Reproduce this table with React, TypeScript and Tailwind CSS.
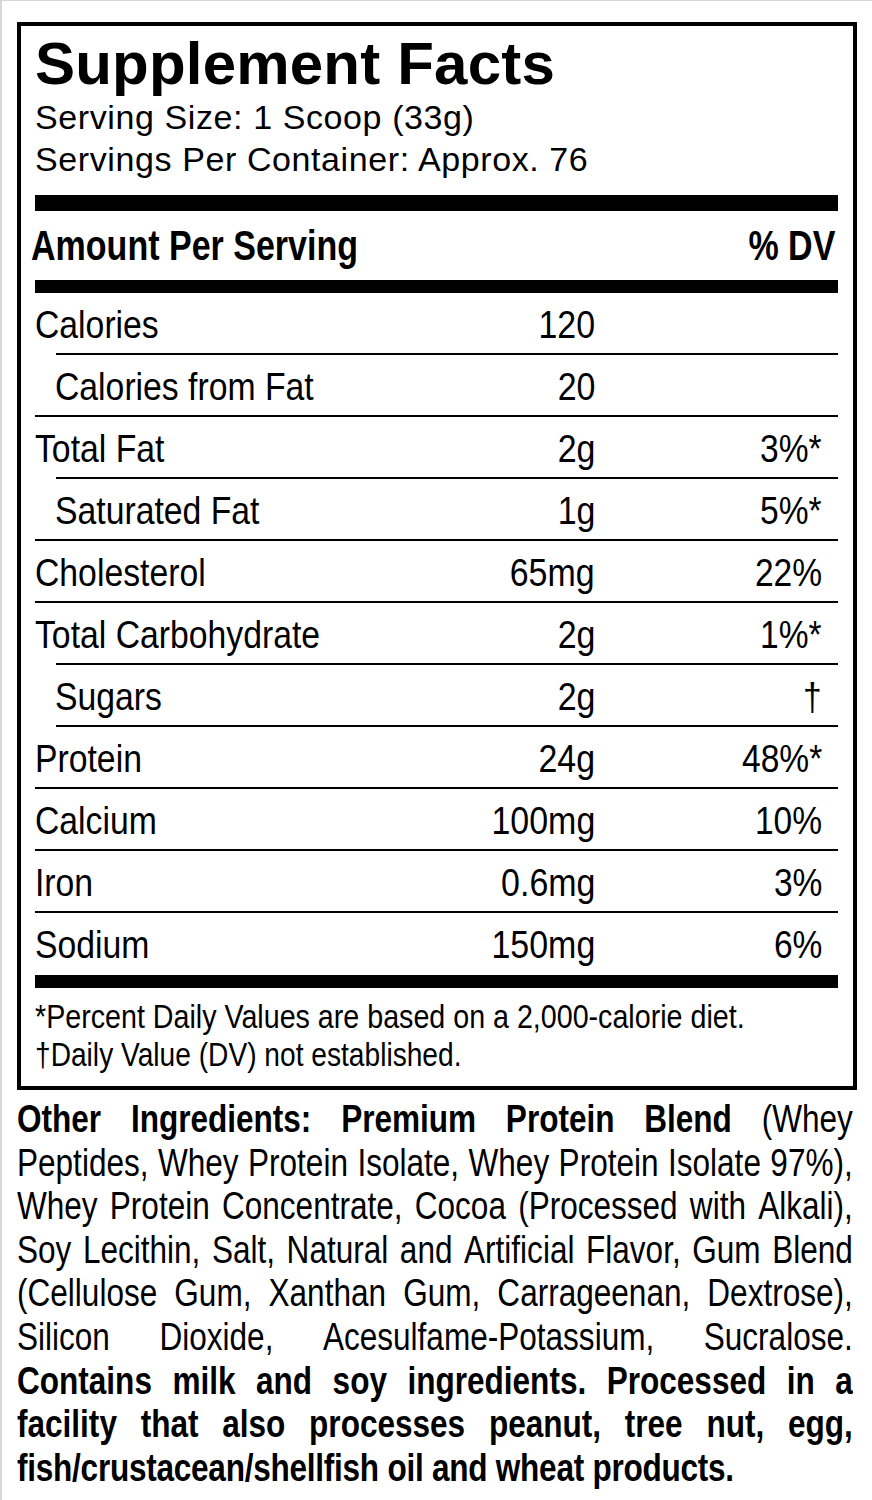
// the label's condensed face is not installed, so Arial-width text is squeezed horizontally
const SANS = "font-['Liberation_Sans',Arial,sans-serif]";

type Row = { label: string; sub?: boolean; amt: string; dv: string; line: 'sub' | 'full' | 'none' };

const ROWS: Row[] = [
  { label: 'Calories', amt: '120', dv: '', line: 'sub' },
  { label: 'Calories from Fat', sub: true, amt: '20', dv: '', line: 'full' },
  { label: 'Total Fat', amt: '2g', dv: '3%*', line: 'sub' },
  { label: 'Saturated Fat', sub: true, amt: '1g', dv: '5%*', line: 'full' },
  { label: 'Cholesterol', amt: '65mg', dv: '22%', line: 'full' },
  { label: 'Total Carbohydrate', amt: '2g', dv: '1%*', line: 'sub' },
  { label: 'Sugars', sub: true, amt: '2g', dv: '†', line: 'sub' },
  { label: 'Protein', amt: '24g', dv: '48%*', line: 'full' },
  { label: 'Calcium', amt: '100mg', dv: '10%', line: 'full' },
  { label: 'Iron', amt: '0.6mg', dv: '3%', line: 'full' },
  { label: 'Sodium', amt: '150mg', dv: '6%', line: 'none' },
];

// each printed line of the ingredient panel, words spread edge to edge
type Word = { t: string; b?: boolean };
const w = (s: string, b = false): Word[] => s.split(' ').map(t => ({ t, b }));

const INGREDIENTS: Word[][] = [
  [...w('Other Ingredients: Premium Protein Blend', true), ...w('(Whey')],
  w('Peptides, Whey Protein Isolate, Whey Protein Isolate 97%),'),
  w('Whey Protein Concentrate, Cocoa (Processed with Alkali),'),
  w('Soy Lecithin, Salt, Natural and Artificial Flavor, Gum Blend'),
  w('(Cellulose Gum, Xanthan Gum, Carrageenan, Dextrose),'),
  w('Silicon Dioxide, Acesulfame-Potassium, Sucralose.'),
  w('Contains milk and soy ingredients. Processed in a', true),
  w('facility that also processes peanut, tree nut, egg,', true),
];

function FactRow({ row }: { row: Row }) {
  return (
    <div>
      <div className={`flex h-[60px] pt-[4px] text-[39px] leading-[56px] ${SANS}`}>
        <div className={`flex-1 whitespace-nowrap ${row.sub ? 'pl-[20px]' : ''}`}>
          <span className="inline-block origin-left scale-x-[0.865]">{row.label}</span>
        </div>
        <div className="shrink-0 whitespace-nowrap text-right">
          <span className="inline-block origin-right scale-x-[0.87]">{row.amt}</span>
        </div>
        <div className="w-[243px] shrink-0 whitespace-nowrap pr-[16px] text-right">
          <span className="inline-block origin-right scale-x-[0.86]">{row.dv}</span>
        </div>
      </div>
      {row.line === 'sub' && <div className="ml-[21px] h-[2px] bg-black" />}
      {row.line === 'full' && <div className="h-[2px] bg-black" />}
      {row.line === 'none' && <div className="h-[2px]" />}
    </div>
  );
}

export default function App() {
  return (
    <div className={`min-h-[1500px] border-t border-l-2 border-[#d6d6d6] bg-white pt-[21px] text-black ${SANS}`}>
      {/* Facts panel */}
      <div className="ml-[15px] w-[840px] border-4 border-black pt-[8px] pb-[12px] pl-[14px] pr-[15px]">
        <h1 className="text-[60px] font-bold leading-[59px] tracking-[0.2px]">Supplement Facts</h1>
        <div className="mt-[4px] text-[34px] leading-[41.5px] tracking-[0.6px]">
          <div>Serving Size: 1 Scoop (33g)</div>
          <div>Servings Per Container: Approx. 76</div>
        </div>

        <div className="mt-[15px] h-[16px] bg-black" />
        <div className="-ml-[4px] flex h-[69px] justify-between whitespace-nowrap pr-[3px] text-[42px] font-bold leading-[69px]">
          <span className="inline-block origin-left scale-x-[0.81]">Amount Per Serving</span>
          <span className="inline-block origin-right scale-x-[0.81]">% DV</span>
        </div>
        <div className="h-[13px] bg-black" />

        {ROWS.map(r => <FactRow key={r.label} row={r} />)}

        <div className="h-[13px] bg-black" />
        <div className="whitespace-nowrap pt-[10px] text-[33.5px] leading-[38px]">
          <div><span className="inline-block origin-left scale-x-[0.855]">*Percent Daily Values are based on a 2,000-calorie diet.</span></div>
          <div><span className="inline-block origin-left scale-x-[0.84]">†Daily Value (DV) not established.</span></div>
        </div>
      </div>

      {/* Other ingredients */}
      <div className="ml-[15px] mt-[8px] w-[836px] overflow-hidden text-[38px] leading-[43.6px]">
        {INGREDIENTS.map((line, i) => (
          <div key={i} className="flex w-[1007px] origin-left scale-x-[0.83] justify-between whitespace-nowrap">
            {line.map((wd, j) => (
              <span key={j} className={wd.b ? 'font-bold' : ''}>{wd.t}</span>
            ))}
          </div>
        ))}
        <div className="w-[1007px] origin-left scale-x-[0.83] whitespace-nowrap font-bold tracking-[-0.3px]">
          fish/crustacean/shellfish oil and wheat products.
        </div>
      </div>
    </div>
  );
}
